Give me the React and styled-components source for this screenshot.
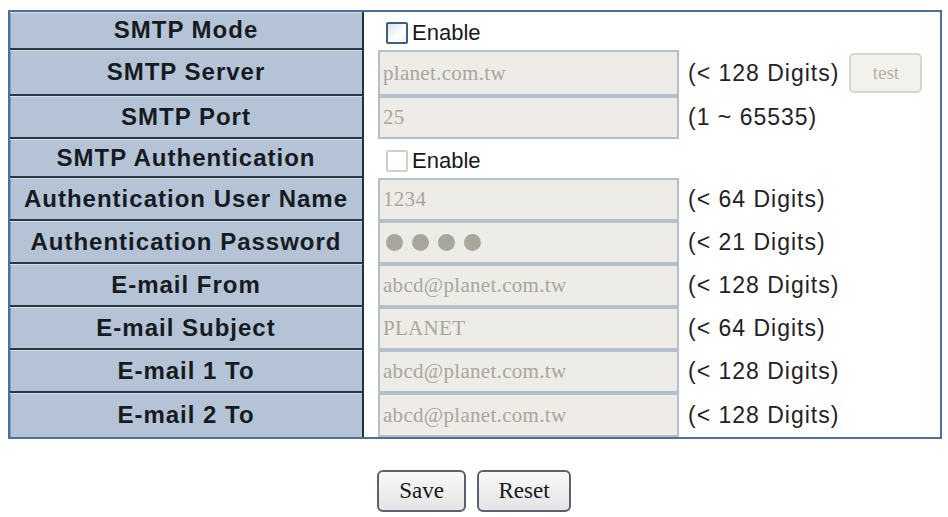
import React from "react";
import styled, { createGlobalStyle } from "styled-components";

const Global = createGlobalStyle`
  html, body { margin: 0; padding: 0; background: #ffffff; }
  body { font-family: "Liberation Sans", Arial, sans-serif; }
`;

const Page = styled.div`
  padding: 10px 6px 0 8px;
  width: 948px;
  box-sizing: border-box;
`;

const Table = styled.div`
  display: flex;
  flex-direction: column;
  border: 2px solid #4f6f9b;
  box-shadow: inset 0 0 0 1px #8ea6c6;
  background: #ffffff;
`;

const Row = styled.div`
  display: grid;
  grid-template-columns: 354px 1fr;
  height: ${(p) => p.$h}px;
`;

const Label = styled.div`
  display: flex;
  align-items: center;
  justify-content: center;
  background: #b4c4d6;
  border-right: 2px solid #27313d;
  border-bottom: ${(p) => (p.$last ? "0" : "2px solid #2c3643")};
  box-shadow: inset 0 1px 0 #d3dde8, inset 1px 0 0 #7f9cc0;
  font-weight: bold;
  font-size: 24px;
  letter-spacing: 1px;
  color: #161b22;
  white-space: nowrap;
`;

const Value = styled.div`
  display: flex;
  align-items: center;
  padding-left: 14px;
  background: #ffffff;
`;

const TextBox = styled.input`
  box-sizing: border-box;
  width: 301px;
  height: 100%;
  margin: 0;
  padding: 0 3px;
  border: 2px solid #b3c0cc;
  background: #edece7;
  font-family: "Liberation Serif", "Times New Roman", serif;
  font-size: 21px;
  letter-spacing: 0.3px;
  color: #aaa69c;
  outline: none;
`;

const DotBox = styled.div`
  box-sizing: border-box;
  width: 301px;
  height: 100%;
  display: flex;
  align-items: center;
  gap: 9px;
  padding-left: 6px;
  border: 2px solid #b3c0cc;
  background: #edece7;
`;

const Dot = styled.span`
  width: 17px;
  height: 17px;
  border-radius: 50%;
  background: #a9a79c;
`;

const Hint = styled.span`
  margin-left: 9px;
  font-size: 23px;
  letter-spacing: 1px;
  color: #1f2226;
  white-space: nowrap;
`;

const TestButton = styled.button`
  margin-left: 10px;
  width: 73px;
  height: 40px;
  border: 2px solid #d6d5cf;
  border-radius: 5px;
  background: #f2f1ec;
  font-family: "Liberation Serif", "Times New Roman", serif;
  font-size: 19px;
  color: #b3b0a7;
  padding: 0;
`;

const CheckWrap = styled.label`
  display: flex;
  align-items: center;
  gap: 4px;
  margin-left: 8px;
  font-size: 22px;
  color: #15191d;
  padding-top: 4px;
`;

const Box = styled.span`
  box-sizing: border-box;
  width: 22px;
  height: 22px;
  border: 2px solid ${(p) => (p.$muted ? "#cfcfcf" : "#3f5d7c")};
  border-radius: 2px;
  background: ${(p) =>
    p.$muted ? "#ffffff" : "linear-gradient(135deg, #dfe1e8 0%, #ffffff 60%, #f3f3f6 100%)"};
`;

const Actions = styled.div`
  display: flex;
  justify-content: center;
  gap: 11px;
  margin-top: 31px;
  padding-right: 2px;
`;

const ActionButton = styled.button`
  box-sizing: border-box;
  height: 42px;
  width: ${(p) => p.$w}px;
  padding: 0;
  border: 2px solid #5a636c;
  border-radius: 6px;
  background: linear-gradient(#f9f9f9, #e4e4e4);
  font-family: "Liberation Serif", "Times New Roman", serif;
  font-size: 23px;
  color: #15181b;
`;

const Check = ({ muted }) => (
  <CheckWrap>
    <Box $muted={muted} />
    Enable
  </CheckWrap>
);

const rows = [
  { label: "SMTP Mode", h: 38, kind: "check" },
  { label: "SMTP Server", h: 46, kind: "text", value: "planet.com.tw", hint: "(< 128 Digits)", test: true },
  { label: "SMTP Port", h: 43, kind: "text", value: "25", hint: "(1 ~ 65535)" },
  { label: "SMTP Authentication", h: 39, kind: "check", muted: true },
  { label: "Authentication User Name", h: 43, kind: "text", value: "1234", hint: "(< 64 Digits)" },
  { label: "Authentication Password", h: 43, kind: "password", hint: "(< 21 Digits)" },
  { label: "E-mail From", h: 43, kind: "text", value: "abcd@planet.com.tw", hint: "(< 128 Digits)" },
  { label: "E-mail Subject", h: 43, kind: "text", value: "PLANET", hint: "(< 64 Digits)" },
  { label: "E-mail 1 To", h: 43, kind: "text", value: "abcd@planet.com.tw", hint: "(< 128 Digits)" },
  { label: "E-mail 2 To", h: 44, kind: "text", value: "abcd@planet.com.tw", hint: "(< 128 Digits)" },
];

export default function App() {
  return (
    <Page>
      <Global />
      <Table>
        {rows.map((r, i) => (
          <Row key={r.label} $h={r.h}>
            <Label $last={i === rows.length - 1}>{r.label}</Label>
            <Value>
              {r.kind === "check" && <Check muted={r.muted} />}
              {r.kind === "text" && <TextBox readOnly value={r.value} />}
              {r.kind === "password" && (
                <DotBox>
                  <Dot />
                  <Dot />
                  <Dot />
                  <Dot />
                </DotBox>
              )}
              {r.hint && <Hint>{r.hint}</Hint>}
              {r.test && <TestButton>test</TestButton>}
            </Value>
          </Row>
        ))}
      </Table>
      <Actions>
        <ActionButton $w={89}>Save</ActionButton>
        <ActionButton $w={94}>Reset</ActionButton>
      </Actions>
    </Page>
  );
}
